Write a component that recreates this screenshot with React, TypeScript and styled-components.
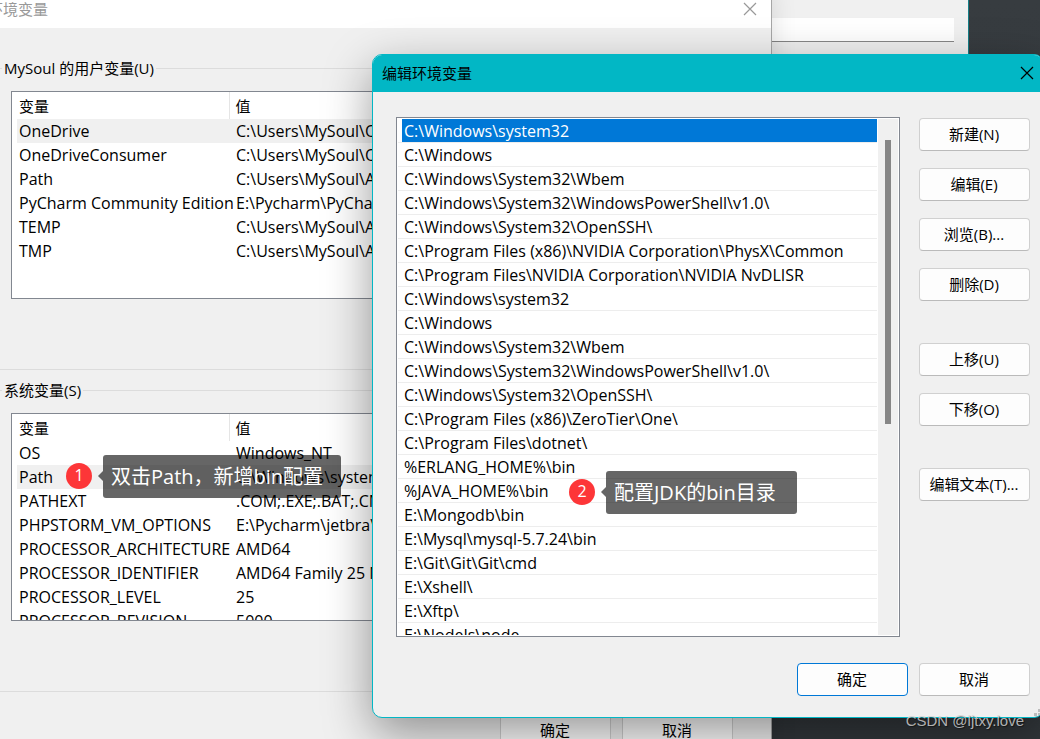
import React from "react";
import styled, { createGlobalStyle, css } from "styled-components";

const GlobalStyle = createGlobalStyle`
  *, *::before, *::after { box-sizing: border-box; }
  body { margin: 0; background: #373c40; }
  body, button, input {
    font-family: "Open Sans", "Noto Sans CJK SC", sans-serif;
    font-size: 15px;
    line-height: 20px;
    color: #000;
  }
`;

const Desktop = styled.main`
  position: relative;
  height: 100vh;
  overflow: hidden;
  background: linear-gradient(#373c40, #32373b);
`;

const PropertiesWindow = styled.section`
  position: absolute;
  top: 0;
  left: 300px;
  right: 71px;
  height: 600px;
  padding: 18px 14px;
  background: #f0f0f0;
  border-right: 1px solid #157f87;
`;

const DescriptionInput = styled.input`
  display: block;
  width: 100%;
  height: 24px;
  padding: 0 6px;
  border: 0;
  border-bottom: 1px solid #868686;
  background: #fff;
`;

const VariablesWindow = styled.section`
  position: absolute;
  top: -18px;
  left: -22px;
  right: 268px;
  background: #f0f0f0;
  border-right: 1px solid #a6a6a6;
  box-shadow: 0 8px 24px rgba(0, 0, 0, 0.12);
`;

const InactiveTitleBar = styled.header`
  display: flex;
  align-items: center;
  justify-content: space-between;
  height: 46px;
  padding: 8px 14px 0 10px;
  background: #fff;
  color: #999;
`;

const Title = styled.h2`
  margin: 0;
  font-size: 15px;
  font-weight: 400;
  line-height: 20px;
`;

const CloseButton = styled.button`
  display: flex;
  padding: 0;
  border: 0;
  background: none;
  color: inherit;
`;

const Groups = styled.div`
  display: flex;
  flex-direction: column;
  gap: 10px;
  padding: 30px 14px 22px;
`;

const Group = styled.fieldset`
  min-width: 0;
  margin: 0;
  padding: 12px 9px 70px;
  border: 1px solid #dcdcdc;
`;

const Legend = styled.legend`
  padding: 0 2px;
  line-height: 21px;
`;

const TablePane = styled.div`
  height: 208px;
  margin-left: 9px;
  padding: 0 5px;
  overflow: hidden;
  border: 1px solid #828790;
  background: #fff;
`;

const Table = styled.table`
  width: 100%;
  table-layout: fixed;
  border-collapse: collapse;
`;

const HeadCell = styled.th<{ $name?: boolean }>`
  height: 27px;
  padding: 0;
  text-align: left;
  font-weight: 400;
  ${(p) =>
    p.$name
      ? css`
          width: 212px;
          padding-left: 2px;
          border-right: 1px solid #e5e5e5;
        `
      : css`
          padding-left: 6px;
        `}
`;

const Row = styled.tr<{ $active?: boolean }>`
  background: ${(p) => (p.$active ? "#f0f0f0" : "transparent")};
`;

const Cell = styled.td<{ $name?: boolean }>`
  height: 24px;
  padding: 0 0 0 ${(p) => (p.$name ? 2 : 7)}px;
  font-size: 16px;
  white-space: nowrap;
`;

const ButtonRow = styled.footer<{ $inset: number }>`
  display: flex;
  justify-content: flex-end;
  gap: 11px;
  padding: 0 ${(p) => p.$inset}px 21px 0;
`;

const Button = styled.button<{ $primary?: boolean; $spaced?: boolean }>`
  width: 111px;
  height: 33px;
  padding: 0 1px 2px 0;
  margin-top: ${(p) => (p.$spaced ? 25 : 0)}px;
  border: 1px solid ${(p) => (p.$primary ? "#0078d7" : "#d0d0d0")};
  border-bottom-color: ${(p) => (p.$primary ? "#0078d7" : "#bababa")};
  border-radius: 4px;
  background: #fdfdfd;
  white-space: nowrap;
`;

const Dialog = styled.section`
  position: absolute;
  top: 54px;
  left: 372px;
  right: -4px;
  overflow: hidden;
  border: 1px solid #02b7c5;
  border-radius: 10px;
  background: #f0f0f0;
  box-shadow: 0 16px 48px rgba(0, 0, 0, 0.4);
`;

const TitleBar = styled.header`
  display: flex;
  align-items: center;
  justify-content: space-between;
  height: 37px;
  padding: 0 9px 2px;
  background: #02b7c5;
`;

const DialogBody = styled.div`
  display: flex;
  gap: 19px;
  padding: 25px 13px 26px 23px;
`;

const ListPane = styled.div`
  flex: 1;
  display: flex;
  min-width: 0;
  height: 520px;
  padding: 1px;
  overflow: hidden;
  border: 1px solid #828790;
  background: #fff;
`;

const PathList = styled.ul`
  flex: 1;
  min-width: 0;
  margin: 0;
  padding: 0;
  overflow: hidden;
  list-style: none;
`;

const PathItem = styled.li`
  height: 24px;
  padding-left: 4px;
  border-bottom: 1px solid #ededed;
`;

const PathText = styled.span<{ $selected?: boolean }>`
  display: block;
  height: 23px;
  padding-left: 2px;
  font-size: 16px;
  line-height: 24px;
  white-space: nowrap;
  background: ${(p) => (p.$selected ? "#0078d7" : "transparent")};
  color: ${(p) => (p.$selected ? "#fff" : "#000")};
`;

const ScrollTrack = styled.div`
  flex: none;
  width: 20px;
  margin-left: 1px;
  padding: 21px 7px 0;
  background: #f0f0f0;
`;

const ScrollThumb = styled.div`
  height: 284px;
  background: #868686;
`;

const Actions = styled.div`
  display: flex;
  flex-direction: column;
  gap: 17px;
  padding-top: 1px;
`;

const Grip = styled.svg`
  position: absolute;
  right: -2px;
  bottom: 1px;
`;

const Callout = styled.div<{ $x: number; $y: number }>`
  position: absolute;
  left: ${(p) => p.$x}px;
  top: ${(p) => p.$y}px;
  display: flex;
  align-items: center;
`;

const Badge = styled.span`
  width: 26px;
  height: 26px;
  margin-bottom: 1px;
  border-radius: 50%;
  background: #fd3638;
  color: #fff;
  font-size: 16px;
  line-height: 24px;
  text-align: center;
`;

const Pointer = styled.span`
  width: 5px;
  height: 10px;
  margin: 0 0 1px 6px;
  background: rgba(0, 0, 0, 0.6);
  clip-path: polygon(0 50%, 100% 0, 100% 100%);
`;

const Tip = styled.span<{ $width: number }>`
  width: ${(p) => p.$width}px;
  height: 43px;
  padding: 0 8px;
  border-radius: 3px;
  background: rgba(0, 0, 0, 0.6);
  color: #fff;
  font-size: 20px;
  line-height: 44px;
  white-space: nowrap;
`;

const Watermark = styled.span`
  position: absolute;
  right: 16px;
  bottom: 8px;
  color: rgba(215, 215, 215, 0.8);
  font-family: "Liberation Sans", sans-serif;
  text-shadow: 1px 1px 1px rgba(0, 0, 0, 0.5);
`;

const CloseIcon = () => (
  <svg width="14" height="14" viewBox="0 0 14 14" fill="none" stroke="currentColor" aria-hidden="true">
    <path d="M1 1 13 13M13 1 1 13" strokeWidth="1.2" />
  </svg>
);

type Variable = { name: string; value: string };

const userVariables: Variable[] = [
  { name: "OneDrive", value: "C:\\Users\\MySoul\\OneDrive" },
  { name: "OneDriveConsumer", value: "C:\\Users\\MySoul\\OneDrive" },
  { name: "Path", value: "C:\\Users\\MySoul\\AppData" },
  { name: "PyCharm Community Edition", value: "E:\\Pycharm\\PyCharm" },
  { name: "TEMP", value: "C:\\Users\\MySoul\\AppData" },
  { name: "TMP", value: "C:\\Users\\MySoul\\AppData" },
];

const systemVariables: Variable[] = [
  { name: "OS", value: "Windows_NT" },
  { name: "Path", value: "C:\\Windows\\system32" },
  { name: "PATHEXT", value: ".COM;.EXE;.BAT;.CMD" },
  { name: "PHPSTORM_VM_OPTIONS", value: "E:\\Pycharm\\jetbra\\" },
  { name: "PROCESSOR_ARCHITECTURE", value: "AMD64" },
  { name: "PROCESSOR_IDENTIFIER", value: "AMD64 Family 25 Model" },
  { name: "PROCESSOR_LEVEL", value: "25" },
  { name: "PROCESSOR_REVISION", value: "5000" },
];

const paths = [
  "C:\\Windows\\system32",
  "C:\\Windows",
  "C:\\Windows\\System32\\Wbem",
  "C:\\Windows\\System32\\WindowsPowerShell\\v1.0\\",
  "C:\\Windows\\System32\\OpenSSH\\",
  "C:\\Program Files (x86)\\NVIDIA Corporation\\PhysX\\Common",
  "C:\\Program Files\\NVIDIA Corporation\\NVIDIA NvDLISR",
  "C:\\Windows\\system32",
  "C:\\Windows",
  "C:\\Windows\\System32\\Wbem",
  "C:\\Windows\\System32\\WindowsPowerShell\\v1.0\\",
  "C:\\Windows\\System32\\OpenSSH\\",
  "C:\\Program Files (x86)\\ZeroTier\\One\\",
  "C:\\Program Files\\dotnet\\",
  "%ERLANG_HOME%\\bin",
  "%JAVA_HOME%\\bin",
  "E:\\Mongodb\\bin",
  "E:\\Mysql\\mysql-5.7.24\\bin",
  "E:\\Git\\Git\\Git\\cmd",
  "E:\\Xshell\\",
  "E:\\Xftp\\",
  "E:\\NodeJs\\node",
];

const actions = [
  { label: "新建(N)" },
  { label: "编辑(E)" },
  { label: "浏览(B)..." },
  { label: "删除(D)" },
  { label: "上移(U)", spaced: true },
  { label: "下移(O)" },
  { label: "编辑文本(T)...", spaced: true },
];

function VariableGroup({ title, rows, active }: { title: string; rows: Variable[]; active: string }) {
  return (
    <Group>
      <Legend>{title}</Legend>
      <TablePane>
        <Table>
          <thead>
            <tr>
              <HeadCell $name scope="col">变量</HeadCell>
              <HeadCell scope="col">值</HeadCell>
            </tr>
          </thead>
          <tbody>
            {rows.map((row) => (
              <Row key={row.name} $active={row.name === active}>
                <Cell $name>{row.name}</Cell>
                <Cell>{row.value}</Cell>
              </Row>
            ))}
          </tbody>
        </Table>
      </TablePane>
    </Group>
  );
}

function NumberedCallout({ n, text, x, y, width }: { n: number; text: string; x: number; y: number; width: number }) {
  return (
    <Callout $x={x} $y={y}>
      <Badge>{n}</Badge>
      <Pointer />
      <Tip $width={width}>{text}</Tip>
    </Callout>
  );
}

export default function App() {
  return (
    <>
      <GlobalStyle />
      <Desktop>
        <PropertiesWindow>
          <DescriptionInput type="text" aria-label="计算机描述" />
        </PropertiesWindow>

        <VariablesWindow>
          <InactiveTitleBar>
            <Title>环境变量</Title>
            <CloseButton aria-label="关闭"><CloseIcon /></CloseButton>
          </InactiveTitleBar>
          <Groups>
            <VariableGroup title="MySoul 的用户变量(U)" rows={userVariables} active="OneDrive" />
            <VariableGroup title="系统变量(S)" rows={systemVariables} active="Path" />
          </Groups>
          <ButtonRow $inset={38}>
            <Button>确定</Button>
            <Button>取消</Button>
          </ButtonRow>
        </VariablesWindow>

        <Dialog role="dialog" aria-label="编辑环境变量">
          <TitleBar>
            <Title>编辑环境变量</Title>
            <CloseButton aria-label="关闭"><CloseIcon /></CloseButton>
          </TitleBar>
          <DialogBody>
            <ListPane>
              <PathList>
                {paths.map((path, i) => (
                  <PathItem key={i}>
                    <PathText $selected={i === 0}>{path}</PathText>
                  </PathItem>
                ))}
              </PathList>
              <ScrollTrack aria-hidden="true">
                <ScrollThumb />
              </ScrollTrack>
            </ListPane>
            <Actions>
              {actions.map((a) => (
                <Button key={a.label} $spaced={a.spaced}>{a.label}</Button>
              ))}
            </Actions>
          </DialogBody>
          <ButtonRow $inset={13}>
            <Button $primary>确定</Button>
            <Button>取消</Button>
          </ButtonRow>
          <Grip width="11" height="11" viewBox="0 0 11 11" fill="#bdbdbd" aria-hidden="true">
            <path d="M8 0h3v3H8zM4 4h3v3H4zM8 4h3v3H8zM0 8h3v3H0zM4 8h3v3H4zM8 8h3v3H8z" />
          </Grip>
        </Dialog>

        <NumberedCallout n={1} text="双击Path，新增bin配置" x={66} y={455} width={238} />
        <NumberedCallout n={2} text="配置JDK的bin目录" x={569} y={471} width={191} />
        <Watermark>CSDN @ljtxy.love</Watermark>
      </Desktop>
    </>
  );
}
